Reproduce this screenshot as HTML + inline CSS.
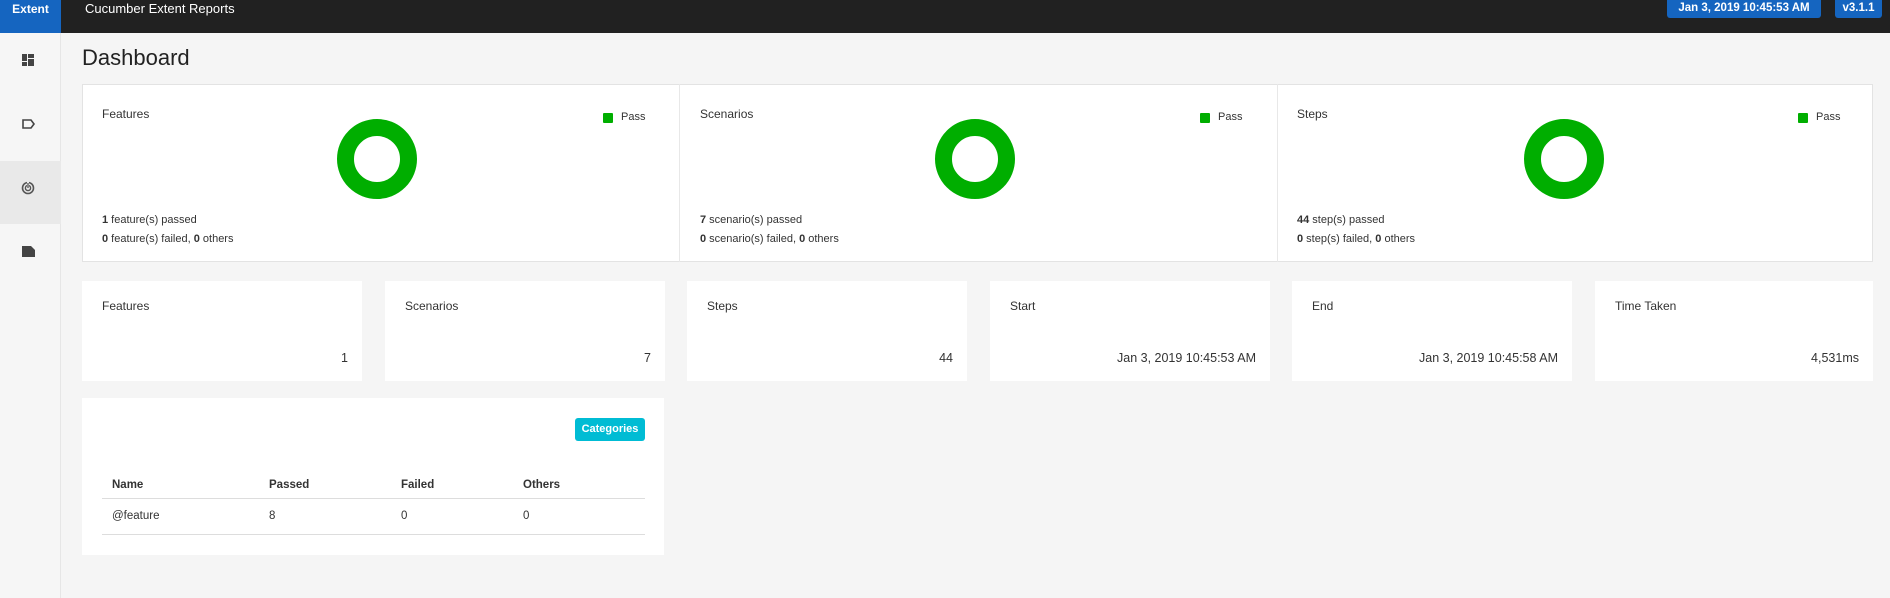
<!DOCTYPE html>
<html><head><meta charset="utf-8"><style>
*{box-sizing:border-box;margin:0;padding:0}
body{width:1890px;height:598px;overflow:hidden;background:#f5f5f5;font-family:"Liberation Sans",sans-serif;color:#333;position:relative}
.abs{position:absolute}
.top{left:0;top:0;width:1890px;height:33px;background:#212121}
.brand{left:0;top:0;width:61px;height:33px;background:#1565c0;color:#fff;font-weight:bold;font-size:12px;text-align:center;padding-top:2px}
.title{left:85px;top:1px;color:#fff;font-size:13px}
.badge{background:#1565c0;color:#fff;font-weight:bold;font-size:11.5px;border-radius:0 0 3px 3px;height:18px;line-height:17px;text-align:center;top:0}
.side{left:0;top:33px;width:61px;height:565px;background:#f6f6f6;border-right:1px solid #e6e6e6}
.card{background:#fff;position:absolute}
.lbl{font-size:12px;color:#333}
.sm{font-size:11px;color:#333;position:absolute}
.val{position:absolute;right:14px;top:70px;font-size:12.5px}
table{border-collapse:collapse;position:absolute;left:20px;top:75px;width:543px;font-size:11.5px}
th{text-align:left;font-weight:bold;height:25px;border-bottom:1px solid #ddd;padding-left:10px}
td{height:36px;border-bottom:1px solid #ddd;padding-left:10px}
</style></head><body>
<div class="abs top"></div>
<div class="abs brand">Extent</div>
<div class="abs title">Cucumber Extent Reports</div>
<div class="abs badge" style="left:1667px;width:154px">Jan 3, 2019 10:45:53 AM</div>
<div class="abs badge" style="left:1835px;width:47px">v3.1.1</div>
<div class="abs side"></div>
<div class="abs" style="left:0;top:161px;width:61px;height:63px;background:#e9e9e9"></div>
<svg class="abs" style="left:22px;top:54px" width="12" height="12"><rect x="0" y="0" width="5" height="7" fill="#444"/><rect x="6" y="0" width="6" height="4" fill="#444"/><rect x="0" y="8" width="5" height="4" fill="#444"/><rect x="6" y="5" width="6" height="7" fill="#444"/></svg>
<svg class="abs" style="left:22px;top:119px" width="13" height="10"><path d="M1 1H9L12 5L9 9H1Z" fill="none" stroke="#444" stroke-width="1.6"/></svg>
<svg class="abs" style="left:21px;top:181px" width="14" height="14"><circle cx="7" cy="7" r="5.5" fill="none" stroke="#555" stroke-width="1.6"/><circle cx="7" cy="7" r="2.6" fill="none" stroke="#555" stroke-width="1.4"/><path d="M7 0V7" stroke="#e9e9e9" stroke-width="2"/><path d="M7 2V7" stroke="#555" stroke-width="1.3"/></svg>
<svg class="abs" style="left:22px;top:246px" width="13" height="11"><path d="M0 0H9L13 4V11H0Z" fill="#444"/></svg>
<div class="abs" style="left:82px;top:45px;font-size:22px;color:#222">Dashboard</div>

<div class="card" style="left:82px;top:84px;width:1791px;height:178px;border:1px solid #e3e3e3"></div>
<div class="abs" style="left:679px;top:84px;width:1px;height:178px;background:#e8e8e8"></div>
<div class="abs" style="left:1277px;top:84px;width:1px;height:178px;background:#e8e8e8"></div>

<div class="abs lbl" style="left:102px;top:107px">Features</div>
<div class="abs lbl" style="left:700px;top:107px">Scenarios</div>
<div class="abs lbl" style="left:1297px;top:107px">Steps</div>
<svg class="abs" style="left:337px;top:119px" width="80" height="80"><circle cx="40" cy="40" r="31.5" fill="none" stroke="#00ae00" stroke-width="17"/></svg>
<svg class="abs" style="left:935px;top:119px" width="80" height="80"><circle cx="40" cy="40" r="31.5" fill="none" stroke="#00ae00" stroke-width="17"/></svg>
<svg class="abs" style="left:1524px;top:119px" width="80" height="80"><circle cx="40" cy="40" r="31.5" fill="none" stroke="#00ae00" stroke-width="17"/></svg>
<div class="abs" style="left:603px;top:113px;width:10px;height:10px;background:#00ae00;border-radius:1px"></div><div class="sm" style="left:621px;top:111px">Pass</div>
<div class="abs" style="left:1200px;top:113px;width:10px;height:10px;background:#00ae00;border-radius:1px"></div><div class="sm" style="left:1218px;top:111px">Pass</div>
<div class="abs" style="left:1798px;top:113px;width:10px;height:10px;background:#00ae00;border-radius:1px"></div><div class="sm" style="left:1816px;top:111px">Pass</div>
<div class="sm" style="left:102px;top:214px"><b>1</b> feature(s) passed</div>
<div class="sm" style="left:102px;top:233px"><b>0</b> feature(s) failed, <b>0</b> others</div>
<div class="sm" style="left:700px;top:214px"><b>7</b> scenario(s) passed</div>
<div class="sm" style="left:700px;top:233px"><b>0</b> scenario(s) failed, <b>0</b> others</div>
<div class="sm" style="left:1297px;top:214px"><b>44</b> step(s) passed</div>
<div class="sm" style="left:1297px;top:233px"><b>0</b> step(s) failed, <b>0</b> others</div>

<div class="card" style="left:82px;top:281px;width:280px;height:100px"><div class="lbl abs" style="left:20px;top:18px">Features</div><div class="val">1</div></div>
<div class="card" style="left:385px;top:281px;width:280px;height:100px"><div class="lbl abs" style="left:20px;top:18px">Scenarios</div><div class="val">7</div></div>
<div class="card" style="left:687px;top:281px;width:280px;height:100px"><div class="lbl abs" style="left:20px;top:18px">Steps</div><div class="val">44</div></div>
<div class="card" style="left:990px;top:281px;width:280px;height:100px"><div class="lbl abs" style="left:20px;top:18px">Start</div><div class="val">Jan 3, 2019 10:45:53 AM</div></div>
<div class="card" style="left:1292px;top:281px;width:280px;height:100px"><div class="lbl abs" style="left:20px;top:18px">End</div><div class="val">Jan 3, 2019 10:45:58 AM</div></div>
<div class="card" style="left:1595px;top:281px;width:278px;height:100px"><div class="lbl abs" style="left:20px;top:18px">Time Taken</div><div class="val">4,531ms</div></div>

<div class="card" style="left:82px;top:398px;width:582px;height:157px">
<div class="abs" style="left:493px;top:20px;width:70px;height:23px;background:#00bcd4;color:#fff;border-radius:3px;font-size:11px;font-weight:bold;text-align:center;line-height:23px">Categories</div>
<table><tr><th style="width:157px">Name</th><th style="width:132px">Passed</th><th style="width:122px">Failed</th><th>Others</th></tr>
<tr><td>@feature</td><td>8</td><td>0</td><td>0</td></tr></table>
</div>
</body></html>
